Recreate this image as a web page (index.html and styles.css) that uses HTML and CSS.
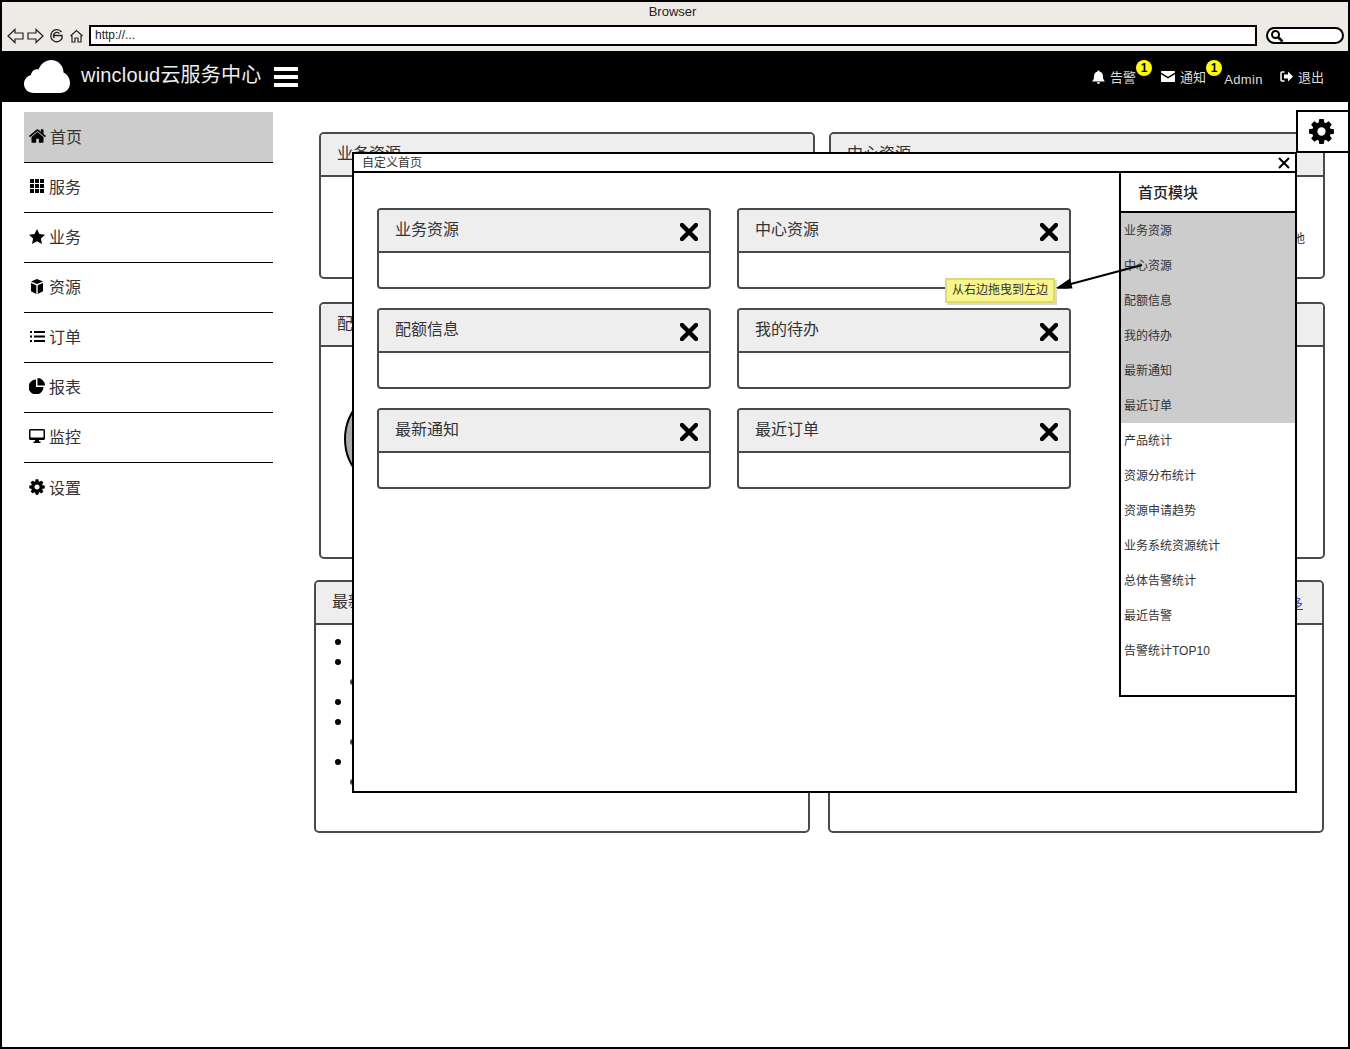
FILE: index.html

```html
<!DOCTYPE html>
<html lang="zh">
<head>
  <meta charset="UTF-8">
  <title>wincloud云服务中心</title>
  <link rel="stylesheet" href="styles.css">
</head>
<body>
<div class="frame">
  <div class="browser">
    <div class="browser-title">Browser</div>
    <div class="browser-row">
      <svg class="browser-icons" width="77" height="18" viewBox="0 0 77 18">
        <path d="M1 9 8 2.500V6H16V12H8V15.500Z" fill="none" stroke="#222" stroke-width="1.200"/>
        <path d="M36 9 29 2.500V6H21V12H29V15.500Z" fill="none" stroke="#222" stroke-width="1.200"/>
        <path d="M54.500 5A6 6 0 1 0 55.500 10.500M47 8.500H55V12M47.500 11A3 3 0 0 1 52.500 6.500" fill="none" stroke="#222" stroke-width="1.300"/>
        <path d="M63.500 9 69.500 3.500 75.500 9M65 8.500V15H68V11H71V15H74V8.500" fill="none" stroke="#222" stroke-width="1.200"/>
      </svg>
      <div class="url-box">http://...</div>
      <div class="search-box">
        <svg width="14" height="14" viewBox="0 0 14 14"><circle cx="5.500" cy="5.500" r="3.500" fill="none" stroke="#000" stroke-width="2"/><path d="M8 8 12.500 12.500" stroke="#000" stroke-width="2.500"/></svg>
      </div>
    </div>
  </div>

  <div class="topnav">
    <svg class="logo" width="46" height="33" viewBox="0 0 46 33"><path d="M10 33C4 33 0 29 0 24 0 19.500 3 16 7 15 7.500 11 11 8.500 14.500 9.500 17 3.500 22 0 27 0 34 0 39.500 5.500 39.500 12.500 43.500 14.500 46 18.500 46 23 46 29 41.500 33 36 33Z" fill="#fff"/></svg>
    <span class="brand">wincloud云服务中心</span>
    <div class="hamburger"><i></i><i></i><i></i></div>
    <div class="nav-right">
      <span class="nav-item">
        <svg width="13" height="14" viewBox="0 0 13 14"><path d="M6.500 0.500C7.200 0.500 7.500 1 7.500 1.500 10 2 11 4 11 6.500 11 9 11.800 10.300 13 11.500H0C1.200 10.300 2 9 2 6.500 2 4 3 2 5.500 1.500 5.500 1 5.800 0.500 6.500 0.500ZM5 12.300H8C8 13.200 7.300 14 6.500 14S5 13.200 5 12.300Z" fill="#fff"/></svg>
        <span>告警</span>
        <b class="badge">1</b>
      </span>
      <span class="nav-item">
        <svg width="14" height="11" viewBox="0 0 14 11"><path d="M1 0H13C13.600 0 14 .4 14 1V1.600L7 5.800 0 1.600V1C0 .4.400 0 1 0ZM0 3.200 7 7.400 14 3.200V10C14 10.600 13.600 11 13 11H1C.4 11 0 10.600 0 10Z" fill="#fff"/></svg>
        <span>通知</span>
        <b class="badge">1</b>
      </span>
      <span class="nav-admin">Admin</span>
      <span class="nav-item nav-logout">
        <svg width="13" height="11" viewBox="0 0 13 11"><path d="M4.500 1H2C1.400 1 1 1.400 1 2V9C1 9.600 1.400 10 2 10H4.500" fill="none" stroke="#fff" stroke-width="1.500"/><path d="M8 .5 13 5.500 8 10.500V7.500H4V3.500H8Z" fill="#fff"/></svg>
        <span>退出</span>
      </span>
    </div>
  </div>

  <div class="page">
    <ul class="sidebar">
      <li class="side-item active">
        <svg class="icon-wide" width="19" height="16" viewBox="0 128 1792 1536"><path d="M1472 992v480q0 26-19 45t-45 19h-384v-384h-256v384h-384q-26 0-45-19t-19-45v-480q0-1 .5-3t.5-3l575-474 575 474q1 2 1 6zm223-69l-62 74q-8 9-21 11h-3q-13 0-21-7l-692-577-692 577q-12 8-24 7-13-2-21-11l-62-74q-8-10-7-23.500t11-21.500l719-599q32-26 76-26t76 26l244 204v-195q0-14 9-23t23-9h192q14 0 23 9t9 23v408l219 182q10 8 11 21.500t-7 23.500z"/></svg>
        首页
      </li>
      <li class="side-item">
        <svg width="16" height="14" viewBox="0 0 16 14"><path d="M1 0h4v4H1zM6 0h4v4H6zM11 0h4v4h-4zM1 5h4v4H1zM6 5h4v4H6zM11 5h4v4h-4zM1 10h4v4H1zM6 10h4v4H6zM11 10h4v4h-4z"/></svg>
        服务
      </li>
      <li class="side-item">
        <svg width="16" height="15" viewBox="0 0 16 15"><path d="M8 0 10.400 5 16 5.700 11.900 9.500 13 15 8 12.300 3 15 4.100 9.500 0 5.700 5.600 5Z"/></svg>
        业务
      </li>
      <li class="side-item">
        <svg width="16" height="15" viewBox="0 0 16 15"><path d="M8 0 14 2.500 8 5 2 2.500ZM2 4 7.300 6.200V15L2 12.300ZM14 4V12.300L8.700 15V6.200Z"/></svg>
        资源
      </li>
      <li class="side-item">
        <svg width="16" height="13" viewBox="0 0 16 13"><path d="M1 1h2v2H1zM5 1h11v2H5zM1 5.500h2v2H1zM5 5.500h11v2H5zM1 10h2v2H1zM5 10h11v2H5z"/></svg>
        订单
      </li>
      <li class="side-item">
        <svg width="16" height="16" viewBox="0 0 16 16"><path d="M7 1.500V9H14.500A7.500 7.500 0 1 1 7 1.500ZM8.500 0A7.500 7.500 0 0 1 16 7.500H8.500Z"/></svg>
        报表
      </li>
      <li class="side-item">
        <svg width="16" height="14" viewBox="0 0 16 14"><path d="M1.500 0H14.500C15.300 0 16 .7 16 1.500V9.500C16 10.300 15.300 11 14.500 11H10V12.500H11.500V14H4.500V12.500H6V11H1.500C.7 11 0 10.300 0 9.500V1.500C0 .7.700 0 1.500 0ZM1.500 1.500V8.500H14.500V1.500Z"/></svg>
        监控
      </li>
      <li class="side-item">
        <svg class="icon-wide" width="18" height="18" viewBox="0 0 1792 1792"><path d="M1152 896q0-106-75-181t-181-75-181 75-75 181 75 181 181 75 181-75 75-181zm512-109v222q0 12-8 23t-20 13l-185 28q-19 54-39 91 35 50 107 138 10 12 10 25t-9 23q-27 37-99 108t-94 71q-12 0-26-9l-138-108q-44 23-91 38-16 136-29 186-7 28-36 28h-222q-14 0-24.500-8.500t-11.500-21.500l-28-184q-49-16-90-37l-141 107q-10 9-25 9-14 0-25-11-126-114-165-168-7-10-7-23 0-12 8-23 15-21 51-66.500t54-70.500q-27-50-41-99l-183-27q-13-2-21-12.500t-8-23.500v-222q0-12 8-23t19-13l186-28q14-46 39-92-40-57-107-138-10-12-10-24 0-10 9-23 26-36 98.500-107.500t94.500-71.500q13 0 26 10l138 107q44-23 91-38 16-136 29-186 7-28 36-28h222q14 0 24.500 8.500t11.500 21.500l28 184q49 16 90 37l142-107q9-9 24-9 13 0 25 10 129 119 165 170 7 8 7 22 0 12-8 23-15 21-51 66.500t-54 70.500q26 50 41 98l183 28q13 2 21 12.500t8 23.500z"/></svg>
        设置
      </li>
    </ul>

    <div class="main">
      <div class="panel-row row-top">
        <section class="panel panel-short">
          <div class="panel-head">业务资源</div>
        </section>
        <section class="panel panel-short">
          <div class="panel-head">中心资源</div>
          <div class="panel-note">其他</div>
        </section>
      </div>
      <div class="panel-row row-top">
        <section class="panel panel-tall">
          <div class="panel-head">配额信息</div>
          <div class="pie"></div>
        </section>
        <section class="panel panel-tall">
          <div class="panel-head">我的待办</div>
        </section>
      </div>
      <div class="panel-row row-bottom">
        <section class="panel panel-list">
          <div class="panel-head">最新通知</div>
          <ul class="dots">
            <li></li>
            <li></li>
            <li class="sub"></li>
            <li></li>
            <li></li>
            <li class="sub"></li>
            <li></li>
            <li class="sub"></li>
          </ul>
        </section>
        <section class="panel panel-list">
          <div class="panel-head head-split">最近订单<a class="more">更多</a></div>
        </section>
      </div>
    </div>
  </div>

  <div class="gear-tab">
    <svg width="29" height="29" viewBox="0 0 1792 1792"><path d="M1152 896q0-106-75-181t-181-75-181 75-75 181 75 181 181 75 181-75 75-181zm512-109v222q0 12-8 23t-20 13l-185 28q-19 54-39 91 35 50 107 138 10 12 10 25t-9 23q-27 37-99 108t-94 71q-12 0-26-9l-138-108q-44 23-91 38-16 136-29 186-7 28-36 28h-222q-14 0-24.500-8.500t-11.500-21.500l-28-184q-49-16-90-37l-141 107q-10 9-25 9-14 0-25-11-126-114-165-168-7-10-7-23 0-12 8-23 15-21 51-66.500t54-70.500q-27-50-41-99l-183-27q-13-2-21-12.500t-8-23.500v-222q0-12 8-23t19-13l186-28q14-46 39-92-40-57-107-138-10-12-10-24 0-10 9-23 26-36 98.500-107.500t94.500-71.500q13 0 26 10l138 107q44-23 91-38 16-136 29-186 7-28 36-28h222q14 0 24.500 8.500t11.500 21.500l28 184q49 16 90 37l142-107q9-9 24-9 13 0 25 10 129 119 165 170 7 8 7 22 0 12-8 23-15 21-51 66.500t-54 70.500q26 50 41 98l183 28q13 2 21 12.500t8 23.500z"/></svg>
  </div>

  <div class="modal">
    <div class="modal-title">
      <span>自定义首页</span>
      <svg width="12" height="12" viewBox="0 0 12 12"><path d="M1 1 11 11M11 1 1 11" stroke="#000" stroke-width="2"/></svg>
    </div>
    <div class="modal-body">
      <div class="card-grid">
        <div class="card"><div class="card-head">业务资源<svg class="card-x" width="18" height="18" viewBox="0 0 18 18"><path d="M2 2 16 16M16 2 2 16"/></svg></div></div>
        <div class="card"><div class="card-head">中心资源<svg class="card-x" width="18" height="18" viewBox="0 0 18 18"><path d="M2 2 16 16M16 2 2 16"/></svg></div></div>
        <div class="card"><div class="card-head">配额信息<svg class="card-x" width="18" height="18" viewBox="0 0 18 18"><path d="M2 2 16 16M16 2 2 16"/></svg></div></div>
        <div class="card"><div class="card-head">我的待办<svg class="card-x" width="18" height="18" viewBox="0 0 18 18"><path d="M2 2 16 16M16 2 2 16"/></svg></div></div>
        <div class="card"><div class="card-head">最新通知<svg class="card-x" width="18" height="18" viewBox="0 0 18 18"><path d="M2 2 16 16M16 2 2 16"/></svg></div></div>
        <div class="card"><div class="card-head">最近订单<svg class="card-x" width="18" height="18" viewBox="0 0 18 18"><path d="M2 2 16 16M16 2 2 16"/></svg></div></div>
      </div>
      <aside class="module-panel">
        <div class="module-head">首页模块</div>
        <ul class="module-list">
          <li class="used">业务资源</li>
          <li class="used">中心资源</li>
          <li class="used">配额信息</li>
          <li class="used">我的待办</li>
          <li class="used">最新通知</li>
          <li class="used">最近订单</li>
          <li>产品统计</li>
          <li>资源分布统计</li>
          <li>资源申请趋势</li>
          <li>业务系统资源统计</li>
          <li>总体告警统计</li>
          <li>最近告警</li>
          <li>告警统计TOP10</li>
        </ul>
      </aside>
    </div>
  </div>

  <div class="hint">从右边拖曳到左边</div>
  <svg class="hint-arrow" width="90" height="30" viewBox="0 0 90 30">
    <path d="M87 3 12 23" stroke="#000" stroke-width="2"/>
    <path d="M1 26 15 16.500 17.500 26.500Z" fill="#000"/>
  </svg>
</div>
</body>
</html>
```

FILE: styles.css

```css
* { box-sizing: border-box; }
html, body { margin: 0; padding: 0; }
body {
  font-family: "Liberation Sans", "Noto Sans CJK SC", sans-serif;
  color: #333;
  background: #fff;
}
ul { list-style: none; margin: 0; padding: 0; }

.frame {
  position: relative;
  width: 1350px;
  height: 1049px;
  border: 2px solid #000;
  overflow: hidden;
}

/* browser chrome */
.browser { height: 49px; background: #eeebe6; }
.browser-title { height: 22px; padding: 3px 5px 0 0; text-align: center; font-size: 13px; line-height: 14px; color: #222; }
.browser-row { display: flex; align-items: center; height: 23px; padding-left: 5px; }
.browser-icons { margin-right: 5px; }
.url-box {
  width: 1168px; height: 21px;
  border: 2px solid #000; background: #fff;
  padding-left: 4px;
  font-size: 12px; line-height: 16px; color: #222;
}
.search-box {
  display: flex; align-items: center;
  width: 78px; height: 17px; margin-left: 9px; padding-left: 2px;
  border: 2px solid #000; border-radius: 9px; background: #fff;
}

/* top nav */
.topnav {
  display: flex; align-items: center;
  height: 51px; padding-left: 22px;
  background: #000; color: #fff;
}
.brand { margin-left: 11px; font-size: 20px; letter-spacing: .2px; color: #eee; position: relative; top: -3px; }
.hamburger { display: flex; flex-direction: column; gap: 4px; margin-left: 13px; }
.hamburger i { display: block; width: 24px; height: 4px; background: #fff; }
.nav-right { display: flex; align-items: center; margin-left: auto; padding-right: 24px; font-size: 12px; color: #ddd; }
.nav-item { display: flex; align-items: center; position: relative; }
.nav-item svg { margin-right: 5px; }
.nav-item + .nav-item { margin-left: 25px; }
.nav-item span { font-size: 13px; }
.badge {
  position: absolute; right: -16px; top: -7px;
  width: 16px; height: 16px; border-radius: 50%;
  background: #ff0; color: #000;
  font-size: 12px; line-height: 16px; text-align: center;
}
.nav-admin { margin-left: 18px; font-size: 13px; letter-spacing: .4px; position: relative; top: 3px; }
.nav-item.nav-logout { margin-left: 17px; }

/* sidebar and content */
.page { display: flex; padding-left: 22px; }
.sidebar { width: 249px; padding-top: 10px; flex: none; }
.side-item {
  display: flex; align-items: center; gap: 4px;
  height: 51px; margin-bottom: -1px; padding: 0 0 2px 5px;
  border-bottom: 1px solid #000;
  font-size: 16px;
}
.side-item:last-child { border-bottom: 0; }
.side-item svg { fill: #000; flex: none; }
.side-item svg.icon-wide { margin-left: -1px; margin-right: -1px; }
.side-item.active { background: #ccc; }

.main { padding: 30px 0 0 46px; }
.panel-row { display: flex; gap: 14px; margin-bottom: 23px; }
.row-bottom { gap: 18px; margin-left: -5px; margin-top: -2px; }
.panel {
  width: 496px;
  border: 2px solid #4a4a4a; border-radius: 5px;
  background: #fff; overflow: hidden;
}
.panel-short { height: 147px; }
.panel-tall { height: 257px; }
.panel-list { height: 253px; }
.panel-head {
  height: 43px; padding-left: 16px;
  background: #eee; border-bottom: 2px solid #4a4a4a;
  font-size: 16px; line-height: 40px;
}
.head-split { display: flex; justify-content: space-between; padding-right: 19px; }
.more { margin-top: 2px; font-size: 12px; color: #3333dd; text-decoration: underline; }
.panel-note { padding: 53px 18px 0 0; text-align: right; font-size: 12px; line-height: 18px; }
.pie {
  width: 106px; height: 106px; margin: 39px 0 0 23px;
  border: 2px solid #000; border-radius: 50%;
  background: #aaa;
}
.dots { padding: 7px 0 0 19px; }
.dots li { display: flex; align-items: center; height: 20px; }
.dots li::before { content: ""; width: 6px; height: 6px; border-radius: 50%; background: #000; }
.dots li.sub { padding-left: 15px; }
.dots li.sub::before { background: #444; }

/* settings tab over the panels */
.gear-tab {
  position: absolute; left: 1294px; top: 108px;
  display: flex; align-items: center; justify-content: center;
  width: 54px; height: 43px; padding-right: 6px;
  border: 2px solid #000; border-right: 0; background: #fff;
}

/* dialog */
.modal {
  position: absolute; left: 350px; top: 150px;
  width: 945px; height: 641px;
  border: 2px solid #000; background: #fff;
  display: flex; flex-direction: column;
}
.modal-title {
  display: flex; align-items: center; justify-content: space-between;
  height: 19px; flex: none; padding: 2px 5px 0 8px;
  border-bottom: 2px solid #000;
  font-size: 12px; line-height: 15px;
}
.modal-title svg { margin-top: -2px; }
.modal-body { display: flex; flex: 1; align-items: flex-start; }
.card-grid {
  display: grid; grid-template-columns: 334px 334px;
  column-gap: 26px; row-gap: 19px;
  padding: 35px 0 0 23px;
}
.card {
  height: 81px;
  border: 2px solid #4a4a4a; border-radius: 4px;
  overflow: hidden;
}
.card-head {
  display: flex; align-items: center; justify-content: space-between;
  height: 43px; padding: 0 11px 6px 16px;
  background: #eee; border-bottom: 2px solid #4a4a4a;
  font-size: 16px;
}
.card-x { fill: none; stroke: #000; stroke-width: 4.500; stroke-linecap: round; margin-top: 8px; }

.module-panel {
  margin-left: auto;
  width: 176px; height: 526px;
  border-left: 2px solid #000; border-bottom: 2px solid #000;
  background: #fff;
  margin-top: -2px;
}
.module-head {
  height: 42px; padding: 2px 0 0 17px;
  border-bottom: 2px solid #000;
  border-top: 2px solid #000;
  font-size: 15px; font-weight: 500; line-height: 36px; color: #222;
}
.module-list li { height: 35px; padding-left: 3px; font-size: 12px; line-height: 37px; }
.module-list li.used { background: #ccc; }

/* annotation over the dialog */
.hint {
  position: absolute; left: 943px; top: 276px;
  width: 110px; height: 25px;
  border: 2px solid #dada6e; background: #f8f58e;
  box-shadow: 2px 2px 0 #dcd7d2;
  font-size: 12px; line-height: 21px; text-align: center;
}
.hint-arrow { position: absolute; left: 1053px; top: 260px; }
```
